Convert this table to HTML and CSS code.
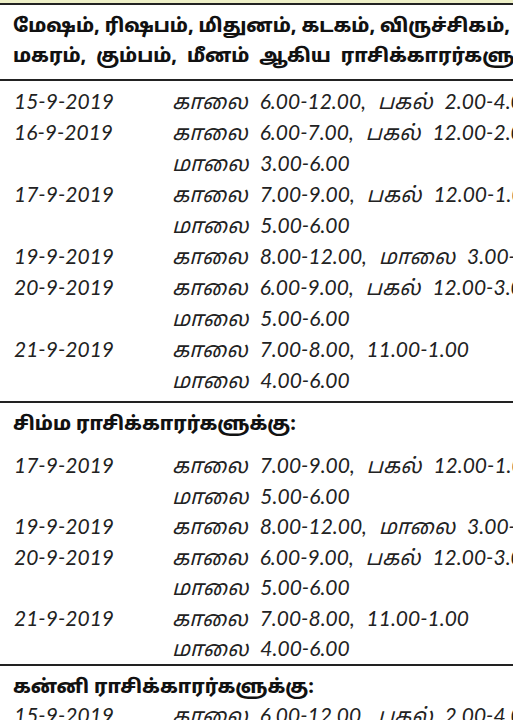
FILE: index.html
```html
<!DOCTYPE html>
<html lang="ta">
<head>
<meta charset="utf-8">
<link rel="stylesheet" href="styles.css">
</head>
<body>
<div class="page">
  <div class="topstrip"></div>
  <section class="block first">
    <h2 class="head">மேஷம், ரிஷபம், மிதுனம், கடகம், விருச்சிகம்,<br><span class="spread">மகரம், கும்பம், மீனம் ஆகிய ராசிக்காரர்களுக்கு:</span></h2>
    <div class="rows ruled">
      <div class="date">15-9-2019</div><div class="time">காலை 6.00-12.00, பகல் 2.00-4.00</div>
      <div class="date">16-9-2019</div><div class="time">காலை 6.00-7.00, பகல் 12.00-2.00</div>
      <div class="date"></div><div class="time">மாலை 3.00-6.00</div>
      <div class="date">17-9-2019</div><div class="time">காலை 7.00-9.00, பகல் 12.00-1.00</div>
      <div class="date"></div><div class="time">மாலை 5.00-6.00</div>
      <div class="date">19-9-2019</div><div class="time">காலை 8.00-12.00, மாலை 3.00-6.00</div>
      <div class="date">20-9-2019</div><div class="time">காலை 6.00-9.00, பகல் 12.00-3.00</div>
      <div class="date"></div><div class="time">மாலை 5.00-6.00</div>
      <div class="date">21-9-2019</div><div class="time">காலை 7.00-8.00, 11.00-1.00</div>
      <div class="date"></div><div class="time">மாலை 4.00-6.00</div>
    </div>
  </section>
  <section class="block">
    <h2 class="head">சிம்ம ராசிக்காரர்களுக்கு:</h2>
    <div class="rows tight">
      <div class="date">17-9-2019</div><div class="time">காலை 7.00-9.00, பகல் 12.00-1.00</div>
      <div class="date"></div><div class="time">மாலை 5.00-6.00</div>
      <div class="date">19-9-2019</div><div class="time">காலை 8.00-12.00, மாலை 3.00-6.00</div>
      <div class="date">20-9-2019</div><div class="time">காலை 6.00-9.00, பகல் 12.00-3.00</div>
      <div class="date"></div><div class="time">மாலை 5.00-6.00</div>
      <div class="date">21-9-2019</div><div class="time">காலை 7.00-8.00, 11.00-1.00</div>
      <div class="date"></div><div class="time">மாலை 4.00-6.00</div>
    </div>
  </section>
  <section class="block">
    <h2 class="head short">கன்னி ராசிக்காரர்களுக்கு:</h2>
    <div class="rows last">
      <div class="date">15-9-2019</div><div class="time">காலை 6.00-12.00, பகல் 2.00-4.00</div>
    </div>
  </section>
</div>
</body>
</html>
```
FILE: styles.css
```css
html, body {
  margin: 0;
  padding: 0;
  background: #ffffff;
}
.page {
  width: 513px;
  height: 720px;
  overflow: hidden;
  color: #1b1b1b;
}
.topstrip {
  height: 3px;
  background: #eef0c8;
}
.block {
  border-top: 2px solid #222222;
}
.head {
  margin: 0;
  padding: 7px 0 7px 13px;
  font-family: "Noto Sans Tamil", "Lohit Tamil", "Noto Sans", "DejaVu Sans", sans-serif;
  font-weight: 800;
  font-size: 19px;
  line-height: 30px;
  white-space: nowrap;
  color: #111111;
}
.spread {
  word-spacing: 5px;
}
.head.short {
  padding-bottom: 0;
}
.rows {
  display: grid;
  grid-template-columns: 158px 1fr;
  padding: 3px 0 6px 14px;
  font-family: "Lato", "Noto Sans Tamil", "Noto Sans", sans-serif;
  font-style: italic;
  font-size: 21px;
  line-height: 31px;
  word-spacing: 7px;
  white-space: nowrap;
  color: #222222;
}
.rows.ruled {
  border-top: 2px solid #222222;
  padding-top: 4px;
}
.rows.tight {
  line-height: 30.5px;
  padding-bottom: 0;
}
.rows.last {
  padding-top: 0;
  line-height: 24px;
}
.date {
  word-spacing: 0;
}
```
